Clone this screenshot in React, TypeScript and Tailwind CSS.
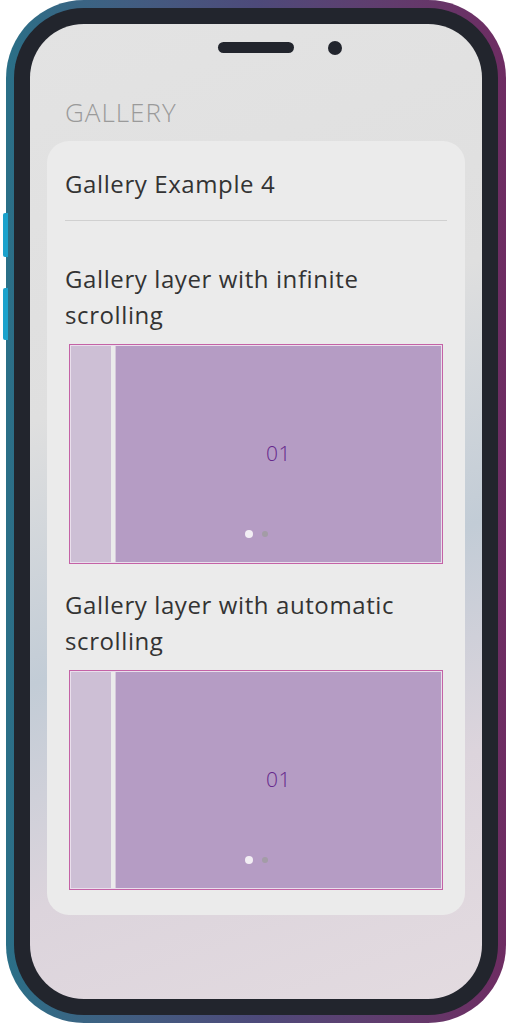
import React from "react";

const font = { fontFamily: '"Open Sans", "Noto Sans", sans-serif' };

function Gallery() {
  return (
    <div className="relative mx-[4px] h-[220px] border border-[#c462a6] bg-[#e9dfec] p-px">
      <div className="flex h-full gap-[4px] bg-[#ebebeb]">
        <div className="w-[40px] bg-[#cdbfd5]" />
        <div className="flex flex-1 items-center justify-center border-l border-[#d6c8dc] bg-[#b59cc4]">
          <span className="text-[21px] font-light tracking-[0.5px] text-[#66288c]">01</span>
        </div>
      </div>
      <div className="absolute bottom-[25px] left-0 right-0 flex items-center justify-center gap-[9px]">
        <span className="h-[8px] w-[8px] rounded-full bg-[#f2eef4]" />
        <span className="h-[6px] w-[6px] rounded-full bg-[#a39ca6]" />
      </div>
    </div>
  );
}

export default function App() {
  return (
    <div className="relative h-[1024px] w-[512px] bg-white" style={font}>
      <div className="absolute left-[3px] top-[213px] h-[44px] w-[5px] rounded-l-[2px] bg-[#1ba2cc]" />
      <div className="absolute left-[3px] top-[288px] h-[52px] w-[5px] rounded-l-[2px] bg-[#1ba2cc]" />

      <div className="ml-[6px] h-[1023px] w-[500px] rounded-[78px] bg-gradient-to-r from-[#2a6f87] via-[#4d4a7a] to-[#6e2c62] p-[8px]">
        <div className="h-full rounded-[70px] bg-[#22252d] p-[16px]">
          <div className="relative h-full overflow-hidden rounded-[54px] bg-[linear-gradient(160deg,#e3e3e3_0%,#dfdfdf_35%,#c2ccd6_58%,#dcd4dc_78%,#e3dbe0_100%)]">
            <div className="absolute left-[188px] top-[18px] h-[11px] w-[76px] rounded-full bg-[#22252d]" />
            <div className="absolute left-[298px] top-[17px] h-[14px] w-[14px] rounded-full bg-[#22252d]" />

            <div className="px-[17px] pt-[70px]">
              <h1 className="pl-[18px] text-[26px] font-light leading-[36px] tracking-[1px] text-[#9a9a9a]">GALLERY</h1>
              <div className="mt-[11px] rounded-[22px] bg-[#ebebeb] px-[18px] pb-[25px] pt-[25px] text-[#333333]">
                <div className="border-b border-[#d0d0d0] pb-[18px] text-[24px] leading-[36px] tracking-[0.6px]">Gallery Example 4</div>
                <h2 className="mt-[40px] text-[24px] leading-[36px] tracking-[0.6px]">
                  Gallery layer with infinite
                  <br />
                  scrolling
                </h2>
                <div className="mt-[11px]">
                  <Gallery />
                </div>
                <h2 className="mt-[23px] text-[24px] leading-[36px] tracking-[0.6px]">
                  Gallery layer with automatic
                  <br />
                  scrolling
                </h2>
                <div className="mt-[11px]">
                  <Gallery />
                </div>
              </div>
            </div>
          </div>
        </div>
      </div>
    </div>
  );
}
